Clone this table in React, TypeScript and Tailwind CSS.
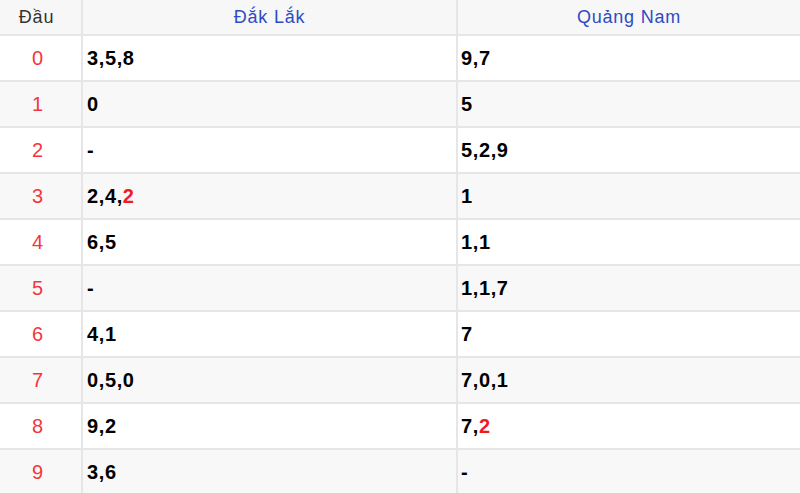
const rows: { head: string; a: string[]; b: string[]; aHot?: number[]; bHot?: number[] }[] = [
  { head: '0', a: ['3', '5', '8'], b: ['9', '7'] },
  { head: '1', a: ['0'], b: ['5'] },
  { head: '2', a: [], b: ['5', '2', '9'] },
  { head: '3', a: ['2', '4', '2'], b: ['1'], aHot: [2] },
  { head: '4', a: ['6', '5'], b: ['1', '1'] },
  { head: '5', a: [], b: ['1', '1', '7'] },
  { head: '6', a: ['4', '1'], b: ['7'] },
  { head: '7', a: ['0', '5', '0'], b: ['7', '0', '1'] },
  { head: '8', a: ['9', '2'], b: ['7', '2'], bHot: [1] },
  { head: '9', a: ['3', '6'], b: [] },
]

const Tails = ({ items, hot = [] }: { items: string[]; hot?: number[] }) => {
  if (items.length === 0) return <span>-</span>
  return (
    <span>
      {items.map((d, i) => (
        <span key={i}>
          {i > 0 && ','}
          <span className={hot.includes(i) ? 'text-[#f01c1c]' : ''}>{d}</span>
        </span>
      ))}
    </span>
  )
}

export default function App() {
  return (
    <div
      className="w-[800px] h-[493px] overflow-hidden bg-white"
      style={{ fontFamily: '"Liberation Sans", Arial, sans-serif' }}
    >
      {/* header */}
      <div className="grid h-[36px] grid-cols-[83px_375px_1fr] border-b-2 border-[#e6e6e6] bg-[#f7f7f7] text-[18px] tracking-[0.8px]">
        <div className="flex items-center justify-center border-r-2 border-[#e6e6e6] pr-[8px] text-[#333]">Đầu</div>
        <div className="flex items-center justify-center border-r-2 border-[#e6e6e6] text-[#2d4cc4]">Đắk Lắk</div>
        <div className="flex items-center justify-center text-[#2d4cc4]">Quảng Nam</div>
      </div>

      {rows.map((r, i) => (
        <div
          key={r.head}
          className={`grid h-[46px] grid-cols-[83px_375px_1fr] border-b-2 border-[#e6e6e6] ${
            i % 2 === 1 ? 'bg-[#f8f8f8]' : 'bg-white'
          }`}
        >
          <div className="flex items-center justify-center border-r-2 border-[#e6e6e6] pr-[6px] text-[20px] text-[#f2373c]">
            {r.head}
          </div>
          <div className="flex items-center border-r-2 border-[#e6e6e6] pl-[4px] text-[20px] font-bold tracking-[0.6px] text-black">
            <Tails items={r.a} hot={r.aHot} />
          </div>
          <div className="flex items-center pl-[3px] text-[20px] font-bold tracking-[0.6px] text-black">
            <Tails items={r.b} hot={r.bHot} />
          </div>
        </div>
      ))}
    </div>
  )
}
